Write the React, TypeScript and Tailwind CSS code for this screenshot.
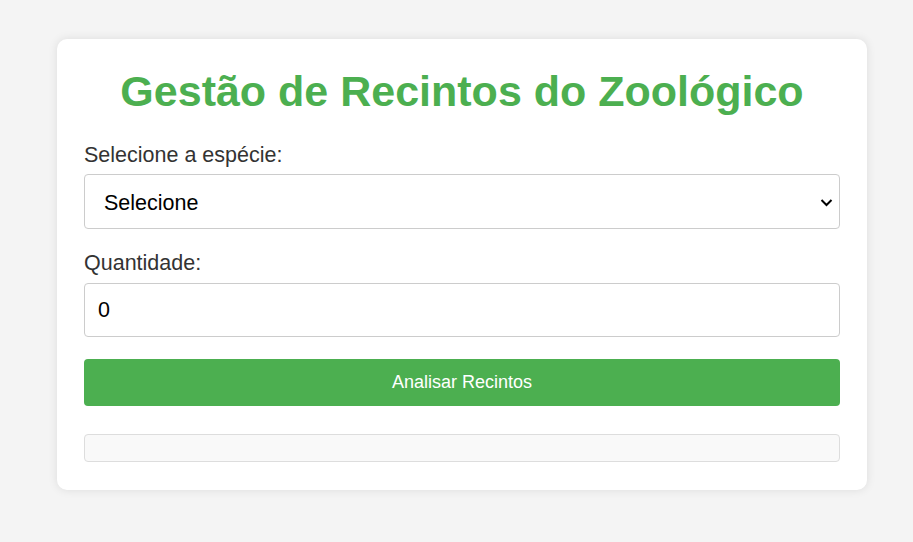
import React from "react";

export default function App() {
  return (
    <div className="min-h-[542px] w-full bg-[#f4f4f4] pt-[39px] pb-[52px]" style={{ fontFamily: '"Liberation Sans", Arial, sans-serif' }}>
      <div className="ml-[57px] w-[810px] rounded-[10px] bg-white px-[27px] pt-[27px] pb-[28px] shadow-[0_0_10px_rgba(0,0,0,0.1)]">
        <h1 className="text-center text-[43px] font-bold leading-[50px] text-[#4caf50]">Gestão de Recintos do Zoológico</h1>
        <div className="flex flex-col">
          <label className="mt-[27px] text-[21.5px] leading-[25px] text-[#333]">Selecione a espécie:</label>
          <div className="relative mt-[6px]">
            <select className="h-[55px] w-full appearance-none rounded-[4px] border border-[#ccc] bg-white pl-[19px] pt-[3px] text-[21.5px] text-black outline-none">
              <option>Selecione</option>
            </select>
            <svg className="pointer-events-none absolute right-[7px] top-[24px]" width="13" height="9" viewBox="0 0 13 9">
              <path d="M1.5 2 L6.5 7 L11.5 2" fill="none" stroke="#000" strokeWidth="2" />
            </svg>
          </div>
          <label className="mt-[22px] text-[21.5px] leading-[25px] text-[#333]">Quantidade:</label>
          <input
            type="text"
            defaultValue="0"
            className="mt-[7px] h-[54px] w-full rounded-[4px] border border-[#ccc] bg-white pl-[13px] text-[21.5px] text-black outline-none"
          />
          <button className="mt-[22px] h-[47px] w-full rounded-[4px] bg-[#4caf50] text-[18px] text-white">Analisar Recintos</button>
          <div className="mt-[28px] h-[28px] w-full rounded-[4px] border border-[#ddd] bg-[#f9f9f9]"></div>
        </div>
      </div>
    </div>
  );
}
